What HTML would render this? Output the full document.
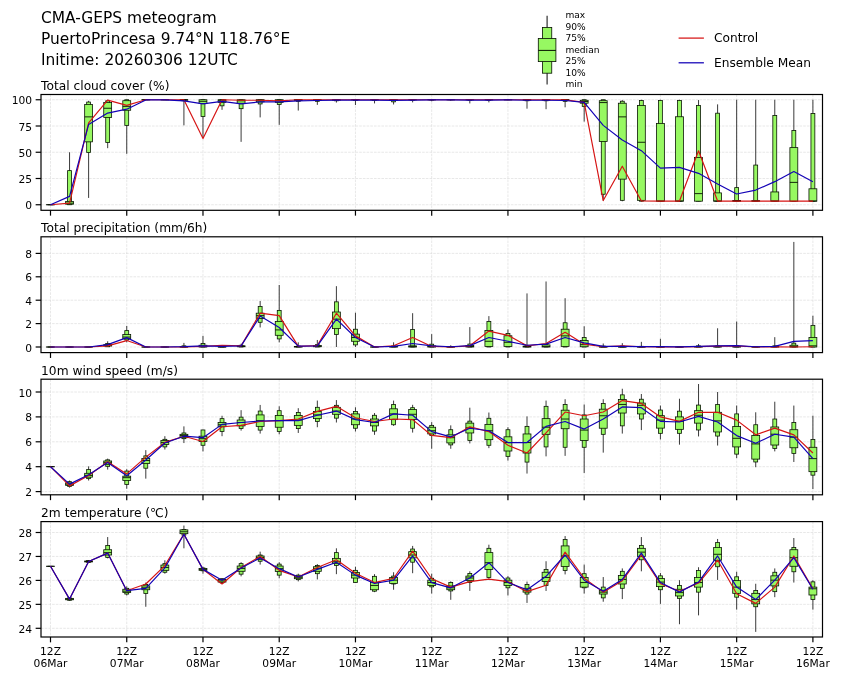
<!DOCTYPE html>
<html lang="en"><head><meta charset="utf-8"><title>CMA-GEPS meteogram</title>
<style>html,body{margin:0;padding:0;background:#fff}svg{display:block;will-change:transform;transform:translateZ(0)}</style></head>
<body>
<svg width="841" height="680" viewBox="0 0 841 680" font-family='"DejaVu Sans", "Liberation Sans", sans-serif'>
<rect width="841" height="680" fill="#fff"/>
<g font-size="15.4" fill="#000">
<text x="41.0" y="22.8">CMA-GEPS meteogram</text>
<text x="41.0" y="43.7">PuertoPrincesa 9.74°N 118.76°E</text>
<text x="41.0" y="64.7">Initime: 20260306 12UTC</text>
</g>
<g stroke="#061000" stroke-width="0.8">
<line x1="547.1" y1="15.7" x2="547.1" y2="84.5" stroke="#303030" stroke-width="1.2"/>
<rect x="542.45" y="27.4" width="9.3" height="45.8" fill="#97f862"/>
<rect x="538.3000000000001" y="38.5" width="17.6" height="23.1" fill="#97f862"/>
<line x1="538.3000000000001" y1="50.4" x2="555.9" y2="50.4" stroke-width="1"/>
</g>
<g font-size="9.1" fill="#000">
<text x="565.4" y="18.10">max</text>
<text x="565.4" y="29.58">90%</text>
<text x="565.4" y="41.06">75%</text>
<text x="565.4" y="52.54">median</text>
<text x="565.4" y="64.02">25%</text>
<text x="565.4" y="75.50">10%</text>
<text x="565.4" y="86.98">min</text>
</g>
<line x1="678.6" y1="38.1" x2="703.9" y2="38.1" stroke="#d61414" stroke-width="1.25"/>
<line x1="678.6" y1="62.8" x2="703.9" y2="62.8" stroke="#1200b6" stroke-width="1.25"/>
<g font-size="12.2" fill="#000"><text x="714.1" y="42.4">Control</text><text x="714.1" y="66.9">Ensemble Mean</text></g>
<g>
<text x="41.1" y="90.00" font-size="12.22" fill="#000">Total cloud cover (%)</text>
<g stroke="#dbdbdb" stroke-width="0.65" stroke-dasharray="2.6 1.1" fill="none">
<line x1="41.0" y1="204.75" x2="822.5" y2="204.75"/>
<line x1="41.0" y1="178.50" x2="822.5" y2="178.50"/>
<line x1="41.0" y1="152.25" x2="822.5" y2="152.25"/>
<line x1="41.0" y1="126.00" x2="822.5" y2="126.00"/>
<line x1="41.0" y1="99.75" x2="822.5" y2="99.75"/>
<line x1="50.50" y1="94.5" x2="50.50" y2="210.3"/>
<line x1="126.74" y1="94.5" x2="126.74" y2="210.3"/>
<line x1="202.98" y1="94.5" x2="202.98" y2="210.3"/>
<line x1="279.22" y1="94.5" x2="279.22" y2="210.3"/>
<line x1="355.46" y1="94.5" x2="355.46" y2="210.3"/>
<line x1="431.70" y1="94.5" x2="431.70" y2="210.3"/>
<line x1="507.94" y1="94.5" x2="507.94" y2="210.3"/>
<line x1="584.18" y1="94.5" x2="584.18" y2="210.3"/>
<line x1="660.42" y1="94.5" x2="660.42" y2="210.3"/>
<line x1="736.66" y1="94.5" x2="736.66" y2="210.3"/>
<line x1="812.90" y1="94.5" x2="812.90" y2="210.3"/>
</g>
<g stroke="#061000" stroke-width="0.78" fill="#97f862">
<line x1="50.50" y1="204.75" x2="50.50" y2="204.75" stroke="#303030" stroke-width="0.95"/>
<rect x="48.55" y="204.75" width="3.9" height="0.01"/>
<rect x="46.55" y="204.75" width="7.9" height="0.01"/>
<line x1="46.55" y1="204.75" x2="54.45" y2="204.75" stroke-width="0.9"/>
<line x1="69.56" y1="152.25" x2="69.56" y2="204.75" stroke="#303030" stroke-width="0.95"/>
<rect x="67.61" y="170.62" width="3.9" height="34.12"/>
<rect x="65.61" y="201.39" width="7.9" height="2.84"/>
<line x1="65.61" y1="203.18" x2="73.51" y2="203.18" stroke-width="0.9"/>
<line x1="88.62" y1="100.80" x2="88.62" y2="197.93" stroke="#303030" stroke-width="0.95"/>
<rect x="86.67" y="102.06" width="3.9" height="50.50"/>
<rect x="84.67" y="104.47" width="7.9" height="37.38"/>
<line x1="84.67" y1="116.86" x2="92.57" y2="116.86" stroke-width="0.9"/>
<line x1="107.68" y1="99.75" x2="107.68" y2="148.16" stroke="#303030" stroke-width="0.95"/>
<rect x="105.73" y="100.80" width="3.9" height="41.69"/>
<rect x="103.73" y="102.58" width="7.9" height="14.80"/>
<line x1="103.73" y1="108.25" x2="111.63" y2="108.25" stroke-width="0.9"/>
<line x1="126.74" y1="99.75" x2="126.74" y2="153.82" stroke="#303030" stroke-width="0.95"/>
<rect x="124.79" y="99.75" width="3.9" height="25.62"/>
<rect x="122.79" y="100.70" width="7.9" height="9.55"/>
<line x1="122.79" y1="106.36" x2="130.69" y2="106.36" stroke-width="0.9"/>
<line x1="145.80" y1="99.75" x2="145.80" y2="99.75" stroke="#303030" stroke-width="0.95"/>
<rect x="143.85" y="99.75" width="3.9" height="0.01"/>
<rect x="141.85" y="99.75" width="7.9" height="0.01"/>
<line x1="141.85" y1="99.75" x2="149.75" y2="99.75" stroke-width="0.9"/>
<line x1="164.86" y1="99.75" x2="164.86" y2="99.75" stroke="#303030" stroke-width="0.95"/>
<rect x="162.91" y="99.75" width="3.9" height="0.01"/>
<rect x="160.91" y="99.75" width="7.9" height="0.01"/>
<line x1="160.91" y1="99.75" x2="168.81" y2="99.75" stroke-width="0.9"/>
<line x1="183.92" y1="99.75" x2="183.92" y2="125.37" stroke="#303030" stroke-width="0.95"/>
<rect x="181.97" y="99.75" width="3.9" height="1.05"/>
<rect x="179.97" y="99.75" width="7.9" height="0.52"/>
<line x1="179.97" y1="99.75" x2="187.87" y2="99.75" stroke-width="0.9"/>
<line x1="202.98" y1="99.75" x2="202.98" y2="137.76" stroke="#303030" stroke-width="0.95"/>
<rect x="201.03" y="99.75" width="3.9" height="16.80"/>
<rect x="199.03" y="99.75" width="7.9" height="3.78"/>
<line x1="199.03" y1="101.32" x2="206.93" y2="101.32" stroke-width="0.9"/>
<line x1="222.04" y1="99.75" x2="222.04" y2="109.83" stroke="#303030" stroke-width="0.95"/>
<rect x="220.09" y="99.75" width="3.9" height="6.09"/>
<rect x="218.09" y="99.75" width="7.9" height="2.62"/>
<line x1="218.09" y1="100.27" x2="225.99" y2="100.27" stroke-width="0.9"/>
<line x1="241.10" y1="99.75" x2="241.10" y2="141.85" stroke="#303030" stroke-width="0.95"/>
<rect x="239.15" y="99.75" width="3.9" height="8.92"/>
<rect x="237.15" y="99.75" width="7.9" height="3.46"/>
<line x1="237.15" y1="100.80" x2="245.05" y2="100.80" stroke-width="0.9"/>
<line x1="260.16" y1="99.75" x2="260.16" y2="117.39" stroke="#303030" stroke-width="0.95"/>
<rect x="258.21" y="99.75" width="3.9" height="4.20"/>
<rect x="256.21" y="99.75" width="7.9" height="2.10"/>
<line x1="256.21" y1="100.27" x2="264.11" y2="100.27" stroke-width="0.9"/>
<line x1="279.22" y1="99.75" x2="279.22" y2="124.84" stroke="#303030" stroke-width="0.95"/>
<rect x="277.27" y="99.75" width="3.9" height="4.72"/>
<rect x="275.27" y="99.75" width="7.9" height="2.62"/>
<line x1="275.27" y1="100.48" x2="283.17" y2="100.48" stroke-width="0.9"/>
<line x1="298.28" y1="99.75" x2="298.28" y2="110.56" stroke="#303030" stroke-width="0.95"/>
<rect x="296.33" y="99.75" width="3.9" height="1.57"/>
<rect x="294.33" y="99.75" width="7.9" height="0.73"/>
<line x1="294.33" y1="99.75" x2="302.23" y2="99.75" stroke-width="0.9"/>
<line x1="317.34" y1="99.75" x2="317.34" y2="104.89" stroke="#303030" stroke-width="0.95"/>
<rect x="315.39" y="99.75" width="3.9" height="1.57"/>
<rect x="313.39" y="99.75" width="7.9" height="0.52"/>
<line x1="313.39" y1="99.75" x2="321.29" y2="99.75" stroke-width="0.9"/>
<line x1="336.40" y1="99.75" x2="336.40" y2="102.58" stroke="#303030" stroke-width="0.95"/>
<rect x="334.45" y="99.75" width="3.9" height="1.05"/>
<rect x="332.45" y="99.75" width="7.9" height="0.42"/>
<line x1="332.45" y1="99.75" x2="340.35" y2="99.75" stroke-width="0.9"/>
<line x1="355.46" y1="99.75" x2="355.46" y2="105.00" stroke="#303030" stroke-width="0.95"/>
<rect x="353.51" y="99.75" width="3.9" height="0.73"/>
<rect x="351.51" y="99.75" width="7.9" height="0.01"/>
<line x1="351.51" y1="99.75" x2="359.41" y2="99.75" stroke-width="0.9"/>
<line x1="374.52" y1="99.75" x2="374.52" y2="103.42" stroke="#303030" stroke-width="0.95"/>
<rect x="372.57" y="99.75" width="3.9" height="0.73"/>
<rect x="370.57" y="99.75" width="7.9" height="0.01"/>
<line x1="370.57" y1="99.75" x2="378.47" y2="99.75" stroke-width="0.9"/>
<line x1="393.58" y1="99.75" x2="393.58" y2="104.47" stroke="#303030" stroke-width="0.95"/>
<rect x="391.63" y="99.75" width="3.9" height="2.10"/>
<rect x="389.63" y="99.75" width="7.9" height="0.52"/>
<line x1="389.63" y1="99.75" x2="397.53" y2="99.75" stroke-width="0.9"/>
<line x1="412.64" y1="99.75" x2="412.64" y2="102.38" stroke="#303030" stroke-width="0.95"/>
<rect x="410.69" y="99.75" width="3.9" height="0.52"/>
<rect x="408.69" y="99.75" width="7.9" height="0.01"/>
<line x1="408.69" y1="99.75" x2="416.59" y2="99.75" stroke-width="0.9"/>
<line x1="431.70" y1="99.75" x2="431.70" y2="101.32" stroke="#303030" stroke-width="0.95"/>
<rect x="429.75" y="99.75" width="3.9" height="0.31"/>
<rect x="427.75" y="99.75" width="7.9" height="0.01"/>
<line x1="427.75" y1="99.75" x2="435.65" y2="99.75" stroke-width="0.9"/>
<line x1="450.76" y1="99.75" x2="450.76" y2="100.80" stroke="#303030" stroke-width="0.95"/>
<rect x="448.81" y="99.75" width="3.9" height="0.01"/>
<rect x="446.81" y="99.75" width="7.9" height="0.01"/>
<line x1="446.81" y1="99.75" x2="454.71" y2="99.75" stroke-width="0.9"/>
<line x1="469.82" y1="99.75" x2="469.82" y2="103.42" stroke="#303030" stroke-width="0.95"/>
<rect x="467.87" y="99.75" width="3.9" height="0.52"/>
<rect x="465.87" y="99.75" width="7.9" height="0.01"/>
<line x1="465.87" y1="99.75" x2="473.77" y2="99.75" stroke-width="0.9"/>
<line x1="488.88" y1="99.75" x2="488.88" y2="102.38" stroke="#303030" stroke-width="0.95"/>
<rect x="486.93" y="99.75" width="3.9" height="0.52"/>
<rect x="484.93" y="99.75" width="7.9" height="0.01"/>
<line x1="484.93" y1="99.75" x2="492.83" y2="99.75" stroke-width="0.9"/>
<line x1="507.94" y1="99.75" x2="507.94" y2="100.27" stroke="#303030" stroke-width="0.95"/>
<rect x="505.99" y="99.75" width="3.9" height="0.01"/>
<rect x="503.99" y="99.75" width="7.9" height="0.01"/>
<line x1="503.99" y1="99.75" x2="511.89" y2="99.75" stroke-width="0.9"/>
<line x1="527.00" y1="99.75" x2="527.00" y2="108.67" stroke="#303030" stroke-width="0.95"/>
<rect x="525.05" y="99.75" width="3.9" height="1.05"/>
<rect x="523.05" y="99.75" width="7.9" height="0.31"/>
<line x1="523.05" y1="99.75" x2="530.95" y2="99.75" stroke-width="0.9"/>
<line x1="546.06" y1="99.75" x2="546.06" y2="109.20" stroke="#303030" stroke-width="0.95"/>
<rect x="544.11" y="99.75" width="3.9" height="1.05"/>
<rect x="542.11" y="99.75" width="7.9" height="0.31"/>
<line x1="542.11" y1="99.75" x2="550.01" y2="99.75" stroke-width="0.9"/>
<line x1="565.12" y1="99.75" x2="565.12" y2="107.31" stroke="#303030" stroke-width="0.95"/>
<rect x="563.17" y="99.75" width="3.9" height="1.57"/>
<rect x="561.17" y="99.75" width="7.9" height="0.52"/>
<line x1="561.17" y1="99.75" x2="569.07" y2="99.75" stroke-width="0.9"/>
<line x1="584.18" y1="99.75" x2="584.18" y2="121.59" stroke="#303030" stroke-width="0.95"/>
<rect x="582.23" y="99.75" width="3.9" height="6.61"/>
<rect x="580.23" y="100.27" width="7.9" height="2.94"/>
<line x1="580.23" y1="101.53" x2="588.13" y2="101.53" stroke-width="0.9"/>
<line x1="603.24" y1="99.75" x2="603.24" y2="200.55" stroke="#303030" stroke-width="0.95"/>
<rect x="601.29" y="99.75" width="3.9" height="94.50"/>
<rect x="599.29" y="100.70" width="7.9" height="40.84"/>
<line x1="599.29" y1="102.58" x2="607.19" y2="102.58" stroke-width="0.9"/>
<line x1="622.30" y1="100.17" x2="622.30" y2="201.28" stroke="#303030" stroke-width="0.95"/>
<rect x="620.35" y="101.22" width="3.9" height="99.12"/>
<rect x="618.35" y="103.21" width="7.9" height="75.92"/>
<line x1="618.35" y1="116.86" x2="626.25" y2="116.86" stroke-width="0.9"/>
<line x1="641.36" y1="99.75" x2="641.36" y2="201.60" stroke="#303030" stroke-width="0.95"/>
<rect x="639.41" y="100.59" width="3.9" height="100.59"/>
<rect x="637.41" y="105.42" width="7.9" height="94.92"/>
<line x1="637.41" y1="142.28" x2="645.31" y2="142.28" stroke-width="0.9"/>
<line x1="660.42" y1="99.75" x2="660.42" y2="201.39" stroke="#303030" stroke-width="0.95"/>
<rect x="658.47" y="100.38" width="3.9" height="100.80"/>
<rect x="656.47" y="123.38" width="7.9" height="77.81"/>
<line x1="656.47" y1="200.97" x2="664.37" y2="200.97" stroke-width="0.9"/>
<line x1="679.48" y1="99.75" x2="679.48" y2="201.39" stroke="#303030" stroke-width="0.95"/>
<rect x="677.53" y="100.38" width="3.9" height="100.80"/>
<rect x="675.53" y="116.76" width="7.9" height="84.42"/>
<line x1="675.53" y1="200.97" x2="683.43" y2="200.97" stroke-width="0.9"/>
<line x1="698.54" y1="100.06" x2="698.54" y2="201.39" stroke="#303030" stroke-width="0.95"/>
<rect x="696.59" y="105.52" width="3.9" height="95.66"/>
<rect x="694.59" y="157.50" width="7.9" height="43.68"/>
<line x1="694.59" y1="193.62" x2="702.49" y2="193.62" stroke-width="0.9"/>
<line x1="717.60" y1="104.37" x2="717.60" y2="201.39" stroke="#303030" stroke-width="0.95"/>
<rect x="715.65" y="113.19" width="3.9" height="87.99"/>
<rect x="713.65" y="192.88" width="7.9" height="8.30"/>
<line x1="713.65" y1="200.97" x2="721.55" y2="200.97" stroke-width="0.9"/>
<line x1="736.66" y1="99.75" x2="736.66" y2="201.39" stroke="#303030" stroke-width="0.95"/>
<rect x="734.71" y="187.63" width="3.9" height="13.55"/>
<rect x="732.71" y="200.55" width="7.9" height="0.63"/>
<line x1="732.71" y1="201.07" x2="740.61" y2="201.07" stroke-width="0.9"/>
<line x1="755.72" y1="99.75" x2="755.72" y2="201.39" stroke="#303030" stroke-width="0.95"/>
<rect x="753.77" y="165.06" width="3.9" height="36.12"/>
<rect x="751.77" y="200.66" width="7.9" height="0.53"/>
<line x1="751.77" y1="201.07" x2="759.67" y2="201.07" stroke-width="0.9"/>
<line x1="774.78" y1="99.75" x2="774.78" y2="201.39" stroke="#303030" stroke-width="0.95"/>
<rect x="772.83" y="115.50" width="3.9" height="85.68"/>
<rect x="770.83" y="191.94" width="7.9" height="9.24"/>
<line x1="770.83" y1="200.97" x2="778.73" y2="200.97" stroke-width="0.9"/>
<line x1="793.84" y1="99.75" x2="793.84" y2="201.39" stroke="#303030" stroke-width="0.95"/>
<rect x="791.89" y="130.51" width="3.9" height="70.67"/>
<rect x="789.89" y="147.63" width="7.9" height="53.55"/>
<line x1="789.89" y1="182.38" x2="797.79" y2="182.38" stroke-width="0.9"/>
<line x1="812.90" y1="99.75" x2="812.90" y2="201.39" stroke="#303030" stroke-width="0.95"/>
<rect x="810.95" y="113.40" width="3.9" height="87.78"/>
<rect x="808.95" y="188.79" width="7.9" height="12.39"/>
<line x1="808.95" y1="200.97" x2="816.85" y2="200.97" stroke-width="0.9"/>
</g>
<polyline points="50.50,204.75 69.56,203.18 88.62,122.85 107.68,100.17 126.74,105.42 145.80,99.75 164.86,99.75 183.92,99.75 202.98,138.60 222.04,99.75 241.10,100.27 260.16,100.27 279.22,100.80 298.28,99.75 317.34,99.75 336.40,99.75 355.46,99.75 374.52,99.75 393.58,99.75 412.64,99.75 431.70,99.75 450.76,99.75 469.82,99.75 488.88,99.75 507.94,99.75 527.00,99.75 546.06,99.75 565.12,99.75 584.18,102.38 603.24,200.55 622.30,166.22 641.36,200.97 660.42,201.18 679.48,201.07 698.54,150.78 717.60,201.07 736.66,201.18 755.72,201.18 774.78,201.18 793.84,201.18 812.90,201.18" fill="none" stroke="#d61414" stroke-width="1.18" stroke-linejoin="round"/>
<polyline points="50.50,204.75 69.56,196.35 88.62,124.42 107.68,113.08 126.74,109.20 145.80,99.96 164.86,99.96 183.92,100.80 202.98,103.95 222.04,101.32 241.10,103.95 260.16,101.85 279.22,101.85 298.28,100.80 317.34,100.48 336.40,100.17 355.46,100.06 374.52,100.17 393.58,100.38 412.64,100.06 431.70,99.96 450.76,99.85 469.82,100.17 488.88,100.06 507.94,99.85 527.00,100.27 546.06,100.27 565.12,100.48 584.18,102.38 603.24,125.37 622.30,139.96 641.36,150.68 660.42,168.10 679.48,167.37 698.54,173.35 717.60,184.06 736.66,194.04 755.72,190.05 774.78,181.65 793.84,171.47 812.90,181.65" fill="none" stroke="#1200b6" stroke-width="1.18" stroke-linejoin="round"/>
<rect x="41.0" y="94.5" width="781.5" height="115.80000000000001" fill="none" stroke="#000" stroke-width="1.2"/>
<g stroke="#000" stroke-width="1.2">
<line x1="35.65" y1="204.75" x2="41.0" y2="204.75"/>
<line x1="35.65" y1="178.50" x2="41.0" y2="178.50"/>
<line x1="35.65" y1="152.25" x2="41.0" y2="152.25"/>
<line x1="35.65" y1="126.00" x2="41.0" y2="126.00"/>
<line x1="35.65" y1="99.75" x2="41.0" y2="99.75"/>
<line x1="50.50" y1="210.3" x2="50.50" y2="215.65"/>
<line x1="126.74" y1="210.3" x2="126.74" y2="215.65"/>
<line x1="202.98" y1="210.3" x2="202.98" y2="215.65"/>
<line x1="279.22" y1="210.3" x2="279.22" y2="215.65"/>
<line x1="355.46" y1="210.3" x2="355.46" y2="215.65"/>
<line x1="431.70" y1="210.3" x2="431.70" y2="215.65"/>
<line x1="507.94" y1="210.3" x2="507.94" y2="215.65"/>
<line x1="584.18" y1="210.3" x2="584.18" y2="215.65"/>
<line x1="660.42" y1="210.3" x2="660.42" y2="215.65"/>
<line x1="736.66" y1="210.3" x2="736.66" y2="215.65"/>
<line x1="812.90" y1="210.3" x2="812.90" y2="215.65"/>
</g>
<g font-size="10.7" fill="#000" text-anchor="end">
<text x="32.1" y="209.25">0</text>
<text x="32.1" y="183.00">25</text>
<text x="32.1" y="156.75">50</text>
<text x="32.1" y="130.50">75</text>
<text x="32.1" y="104.25">100</text>
</g>
</g>
<g>
<text x="41.1" y="232.30" font-size="12.22" fill="#000">Total precipitation (mm/6h)</text>
<g stroke="#dbdbdb" stroke-width="0.65" stroke-dasharray="2.6 1.1" fill="none">
<line x1="41.0" y1="347.00" x2="822.5" y2="347.00"/>
<line x1="41.0" y1="323.60" x2="822.5" y2="323.60"/>
<line x1="41.0" y1="300.20" x2="822.5" y2="300.20"/>
<line x1="41.0" y1="276.80" x2="822.5" y2="276.80"/>
<line x1="41.0" y1="253.40" x2="822.5" y2="253.40"/>
<line x1="50.50" y1="236.8" x2="50.50" y2="352.6"/>
<line x1="126.74" y1="236.8" x2="126.74" y2="352.6"/>
<line x1="202.98" y1="236.8" x2="202.98" y2="352.6"/>
<line x1="279.22" y1="236.8" x2="279.22" y2="352.6"/>
<line x1="355.46" y1="236.8" x2="355.46" y2="352.6"/>
<line x1="431.70" y1="236.8" x2="431.70" y2="352.6"/>
<line x1="507.94" y1="236.8" x2="507.94" y2="352.6"/>
<line x1="584.18" y1="236.8" x2="584.18" y2="352.6"/>
<line x1="660.42" y1="236.8" x2="660.42" y2="352.6"/>
<line x1="736.66" y1="236.8" x2="736.66" y2="352.6"/>
<line x1="812.90" y1="236.8" x2="812.90" y2="352.6"/>
</g>
<g stroke="#061000" stroke-width="0.78" fill="#97f862">
<line x1="50.50" y1="347.00" x2="50.50" y2="347.00" stroke="#303030" stroke-width="0.95"/>
<rect x="48.55" y="347.00" width="3.9" height="0.01"/>
<rect x="46.55" y="347.00" width="7.9" height="0.01"/>
<line x1="46.55" y1="347.00" x2="54.45" y2="347.00" stroke-width="0.9"/>
<line x1="69.56" y1="347.00" x2="69.56" y2="347.00" stroke="#303030" stroke-width="0.95"/>
<rect x="67.61" y="347.00" width="3.9" height="0.01"/>
<rect x="65.61" y="347.00" width="7.9" height="0.01"/>
<line x1="65.61" y1="347.00" x2="73.51" y2="347.00" stroke-width="0.9"/>
<line x1="88.62" y1="347.00" x2="88.62" y2="347.00" stroke="#303030" stroke-width="0.95"/>
<rect x="86.67" y="347.00" width="3.9" height="0.01"/>
<rect x="84.67" y="347.00" width="7.9" height="0.01"/>
<line x1="84.67" y1="347.00" x2="92.57" y2="347.00" stroke-width="0.9"/>
<line x1="107.68" y1="341.27" x2="107.68" y2="347.00" stroke="#303030" stroke-width="0.95"/>
<rect x="105.73" y="343.49" width="3.9" height="3.28"/>
<rect x="103.73" y="344.66" width="7.9" height="1.40"/>
<line x1="103.73" y1="345.25" x2="111.63" y2="345.25" stroke-width="0.9"/>
<line x1="126.74" y1="325.94" x2="126.74" y2="342.32" stroke="#303030" stroke-width="0.95"/>
<rect x="124.79" y="330.62" width="3.9" height="9.36"/>
<rect x="122.79" y="334.60" width="7.9" height="4.21"/>
<line x1="122.79" y1="337.06" x2="130.69" y2="337.06" stroke-width="0.9"/>
<line x1="145.80" y1="346.77" x2="145.80" y2="347.00" stroke="#303030" stroke-width="0.95"/>
<rect x="143.85" y="347.00" width="3.9" height="0.01"/>
<rect x="141.85" y="347.00" width="7.9" height="0.01"/>
<line x1="141.85" y1="347.00" x2="149.75" y2="347.00" stroke-width="0.9"/>
<line x1="164.86" y1="346.77" x2="164.86" y2="347.00" stroke="#303030" stroke-width="0.95"/>
<rect x="162.91" y="347.00" width="3.9" height="0.01"/>
<rect x="160.91" y="347.00" width="7.9" height="0.01"/>
<line x1="160.91" y1="347.00" x2="168.81" y2="347.00" stroke-width="0.9"/>
<line x1="183.92" y1="342.90" x2="183.92" y2="347.00" stroke="#303030" stroke-width="0.95"/>
<rect x="181.97" y="345.83" width="3.9" height="1.17"/>
<rect x="179.97" y="346.65" width="7.9" height="0.35"/>
<line x1="179.97" y1="347.00" x2="187.87" y2="347.00" stroke-width="0.9"/>
<line x1="202.98" y1="335.88" x2="202.98" y2="347.00" stroke="#303030" stroke-width="0.95"/>
<rect x="201.03" y="343.49" width="3.9" height="3.51"/>
<rect x="199.03" y="345.25" width="7.9" height="1.75"/>
<line x1="199.03" y1="346.65" x2="206.93" y2="346.65" stroke-width="0.9"/>
<line x1="222.04" y1="345.83" x2="222.04" y2="347.00" stroke="#303030" stroke-width="0.95"/>
<rect x="220.09" y="346.42" width="3.9" height="0.58"/>
<rect x="218.09" y="346.77" width="7.9" height="0.23"/>
<line x1="218.09" y1="347.00" x2="225.99" y2="347.00" stroke-width="0.9"/>
<line x1="241.10" y1="343.72" x2="241.10" y2="347.00" stroke="#303030" stroke-width="0.95"/>
<rect x="239.15" y="345.25" width="3.9" height="1.75"/>
<rect x="237.15" y="345.83" width="7.9" height="0.94"/>
<line x1="237.15" y1="346.30" x2="245.05" y2="346.30" stroke-width="0.9"/>
<line x1="260.16" y1="301.02" x2="260.16" y2="327.46" stroke="#303030" stroke-width="0.95"/>
<rect x="258.21" y="306.52" width="3.9" height="15.79"/>
<rect x="256.21" y="313.19" width="7.9" height="5.26"/>
<line x1="256.21" y1="315.64" x2="264.11" y2="315.64" stroke-width="0.9"/>
<line x1="279.22" y1="284.99" x2="279.22" y2="342.32" stroke="#303030" stroke-width="0.95"/>
<rect x="277.27" y="310.38" width="3.9" height="28.55"/>
<rect x="275.27" y="321.61" width="7.9" height="13.69"/>
<line x1="275.27" y1="329.92" x2="283.17" y2="329.92" stroke-width="0.9"/>
<line x1="298.28" y1="342.32" x2="298.28" y2="347.00" stroke="#303030" stroke-width="0.95"/>
<rect x="296.33" y="346.06" width="3.9" height="0.94"/>
<rect x="294.33" y="346.42" width="7.9" height="0.58"/>
<line x1="294.33" y1="346.77" x2="302.23" y2="346.77" stroke-width="0.9"/>
<line x1="317.34" y1="339.98" x2="317.34" y2="347.00" stroke="#303030" stroke-width="0.95"/>
<rect x="315.39" y="344.66" width="3.9" height="2.34"/>
<rect x="313.39" y="345.60" width="7.9" height="1.17"/>
<line x1="313.39" y1="346.30" x2="321.29" y2="346.30" stroke-width="0.9"/>
<line x1="336.40" y1="286.16" x2="336.40" y2="347.00" stroke="#303030" stroke-width="0.95"/>
<rect x="334.45" y="301.84" width="3.9" height="32.76"/>
<rect x="332.45" y="312.02" width="7.9" height="16.61"/>
<line x1="332.45" y1="319.15" x2="340.35" y2="319.15" stroke-width="0.9"/>
<line x1="355.46" y1="312.72" x2="355.46" y2="347.00" stroke="#303030" stroke-width="0.95"/>
<rect x="353.51" y="329.22" width="3.9" height="15.68"/>
<rect x="351.51" y="334.13" width="7.9" height="7.14"/>
<line x1="351.51" y1="337.52" x2="359.41" y2="337.52" stroke-width="0.9"/>
<line x1="374.52" y1="346.65" x2="374.52" y2="347.00" stroke="#303030" stroke-width="0.95"/>
<rect x="372.57" y="347.00" width="3.9" height="0.01"/>
<rect x="370.57" y="347.00" width="7.9" height="0.01"/>
<line x1="370.57" y1="347.00" x2="378.47" y2="347.00" stroke-width="0.9"/>
<line x1="393.58" y1="342.32" x2="393.58" y2="347.00" stroke="#303030" stroke-width="0.95"/>
<rect x="391.63" y="345.83" width="3.9" height="1.17"/>
<rect x="389.63" y="346.42" width="7.9" height="0.58"/>
<line x1="389.63" y1="346.77" x2="397.53" y2="346.77" stroke-width="0.9"/>
<line x1="412.64" y1="313.19" x2="412.64" y2="347.00" stroke="#303030" stroke-width="0.95"/>
<rect x="410.69" y="329.45" width="3.9" height="17.55"/>
<rect x="408.69" y="345.83" width="7.9" height="1.17"/>
<line x1="408.69" y1="346.65" x2="416.59" y2="346.65" stroke-width="0.9"/>
<line x1="431.70" y1="334.13" x2="431.70" y2="347.00" stroke="#303030" stroke-width="0.95"/>
<rect x="429.75" y="344.19" width="3.9" height="2.81"/>
<rect x="427.75" y="345.83" width="7.9" height="1.17"/>
<line x1="427.75" y1="346.65" x2="435.65" y2="346.65" stroke-width="0.9"/>
<line x1="450.76" y1="345.25" x2="450.76" y2="347.00" stroke="#303030" stroke-width="0.95"/>
<rect x="448.81" y="346.42" width="3.9" height="0.58"/>
<rect x="446.81" y="346.77" width="7.9" height="0.23"/>
<line x1="446.81" y1="347.00" x2="454.71" y2="347.00" stroke-width="0.9"/>
<line x1="469.82" y1="327.11" x2="469.82" y2="347.00" stroke="#303030" stroke-width="0.95"/>
<rect x="467.87" y="344.07" width="3.9" height="2.93"/>
<rect x="465.87" y="345.60" width="7.9" height="1.40"/>
<line x1="465.87" y1="346.53" x2="473.77" y2="346.53" stroke-width="0.9"/>
<line x1="488.88" y1="316.11" x2="488.88" y2="347.00" stroke="#303030" stroke-width="0.95"/>
<rect x="486.93" y="321.61" width="3.9" height="25.39"/>
<rect x="484.93" y="330.39" width="7.9" height="16.03"/>
<line x1="484.93" y1="341.27" x2="492.83" y2="341.27" stroke-width="0.9"/>
<line x1="507.94" y1="329.45" x2="507.94" y2="347.00" stroke="#303030" stroke-width="0.95"/>
<rect x="505.99" y="333.43" width="3.9" height="13.57"/>
<rect x="503.99" y="335.77" width="7.9" height="10.65"/>
<line x1="503.99" y1="342.32" x2="511.89" y2="342.32" stroke-width="0.9"/>
<line x1="527.00" y1="293.41" x2="527.00" y2="347.00" stroke="#303030" stroke-width="0.95"/>
<rect x="525.05" y="345.25" width="3.9" height="1.75"/>
<rect x="523.05" y="346.06" width="7.9" height="0.94"/>
<line x1="523.05" y1="346.65" x2="530.95" y2="346.65" stroke-width="0.9"/>
<line x1="546.06" y1="281.48" x2="546.06" y2="347.00" stroke="#303030" stroke-width="0.95"/>
<rect x="544.11" y="344.66" width="3.9" height="2.34"/>
<rect x="542.11" y="344.89" width="7.9" height="2.11"/>
<line x1="542.11" y1="346.42" x2="550.01" y2="346.42" stroke-width="0.9"/>
<line x1="565.12" y1="298.21" x2="565.12" y2="347.00" stroke="#303030" stroke-width="0.95"/>
<rect x="563.17" y="322.78" width="3.9" height="24.22"/>
<rect x="561.17" y="329.22" width="7.9" height="17.20"/>
<line x1="561.17" y1="335.88" x2="569.07" y2="335.88" stroke-width="0.9"/>
<line x1="584.18" y1="326.29" x2="584.18" y2="347.00" stroke="#303030" stroke-width="0.95"/>
<rect x="582.23" y="337.52" width="3.9" height="9.48"/>
<rect x="580.23" y="340.56" width="7.9" height="6.20"/>
<line x1="580.23" y1="344.66" x2="588.13" y2="344.66" stroke-width="0.9"/>
<line x1="603.24" y1="343.49" x2="603.24" y2="347.00" stroke="#303030" stroke-width="0.95"/>
<rect x="601.29" y="346.06" width="3.9" height="0.94"/>
<rect x="599.29" y="346.65" width="7.9" height="0.35"/>
<line x1="599.29" y1="347.00" x2="607.19" y2="347.00" stroke-width="0.9"/>
<line x1="622.30" y1="343.14" x2="622.30" y2="347.00" stroke="#303030" stroke-width="0.95"/>
<rect x="620.35" y="346.06" width="3.9" height="0.94"/>
<rect x="618.35" y="346.65" width="7.9" height="0.35"/>
<line x1="618.35" y1="347.00" x2="626.25" y2="347.00" stroke-width="0.9"/>
<line x1="641.36" y1="341.85" x2="641.36" y2="347.00" stroke="#303030" stroke-width="0.95"/>
<rect x="639.41" y="346.30" width="3.9" height="0.70"/>
<rect x="637.41" y="346.77" width="7.9" height="0.23"/>
<line x1="637.41" y1="347.00" x2="645.31" y2="347.00" stroke-width="0.9"/>
<line x1="660.42" y1="338.81" x2="660.42" y2="347.00" stroke="#303030" stroke-width="0.95"/>
<rect x="658.47" y="346.42" width="3.9" height="0.58"/>
<rect x="656.47" y="346.77" width="7.9" height="0.23"/>
<line x1="656.47" y1="347.00" x2="664.37" y2="347.00" stroke-width="0.9"/>
<line x1="679.48" y1="346.65" x2="679.48" y2="347.00" stroke="#303030" stroke-width="0.95"/>
<rect x="677.53" y="346.88" width="3.9" height="0.12"/>
<rect x="675.53" y="347.00" width="7.9" height="0.01"/>
<line x1="675.53" y1="347.00" x2="683.43" y2="347.00" stroke-width="0.9"/>
<line x1="698.54" y1="343.96" x2="698.54" y2="347.00" stroke="#303030" stroke-width="0.95"/>
<rect x="696.59" y="345.83" width="3.9" height="1.17"/>
<rect x="694.59" y="346.42" width="7.9" height="0.58"/>
<line x1="694.59" y1="346.77" x2="702.49" y2="346.77" stroke-width="0.9"/>
<line x1="717.60" y1="328.28" x2="717.60" y2="347.00" stroke="#303030" stroke-width="0.95"/>
<rect x="715.65" y="345.83" width="3.9" height="1.17"/>
<rect x="713.65" y="346.42" width="7.9" height="0.58"/>
<line x1="713.65" y1="346.77" x2="721.55" y2="346.77" stroke-width="0.9"/>
<line x1="736.66" y1="321.49" x2="736.66" y2="347.00" stroke="#303030" stroke-width="0.95"/>
<rect x="734.71" y="345.83" width="3.9" height="1.17"/>
<rect x="732.71" y="346.42" width="7.9" height="0.58"/>
<line x1="732.71" y1="346.77" x2="740.61" y2="346.77" stroke-width="0.9"/>
<line x1="755.72" y1="346.65" x2="755.72" y2="347.00" stroke="#303030" stroke-width="0.95"/>
<rect x="753.77" y="346.88" width="3.9" height="0.12"/>
<rect x="751.77" y="347.00" width="7.9" height="0.01"/>
<line x1="751.77" y1="347.00" x2="759.67" y2="347.00" stroke-width="0.9"/>
<line x1="774.78" y1="337.17" x2="774.78" y2="347.00" stroke="#303030" stroke-width="0.95"/>
<rect x="772.83" y="345.83" width="3.9" height="1.17"/>
<rect x="770.83" y="346.42" width="7.9" height="0.58"/>
<line x1="770.83" y1="346.77" x2="778.73" y2="346.77" stroke-width="0.9"/>
<line x1="793.84" y1="241.93" x2="793.84" y2="347.00" stroke="#303030" stroke-width="0.95"/>
<rect x="791.89" y="343.14" width="3.9" height="3.86"/>
<rect x="789.89" y="345.25" width="7.9" height="1.75"/>
<line x1="789.89" y1="346.65" x2="797.79" y2="346.65" stroke-width="0.9"/>
<line x1="812.90" y1="315.76" x2="812.90" y2="347.00" stroke="#303030" stroke-width="0.95"/>
<rect x="810.95" y="325.36" width="3.9" height="21.64"/>
<rect x="808.95" y="337.41" width="7.9" height="9.59"/>
<line x1="808.95" y1="345.83" x2="816.85" y2="345.83" stroke-width="0.9"/>
</g>
<polyline points="50.50,347.00 69.56,347.00 88.62,347.00 107.68,345.83 126.74,340.56 145.80,347.00 164.86,347.00 183.92,347.00 202.98,346.42 222.04,345.25 241.10,345.83 260.16,313.19 279.22,315.64 298.28,346.42 317.34,345.60 336.40,313.19 355.46,335.88 374.52,347.00 393.58,345.83 412.64,337.52 431.70,346.42 450.76,347.00 469.82,345.83 488.88,331.09 507.94,335.30 527.00,345.83 546.06,343.49 565.12,332.26 584.18,344.19 603.24,346.77 622.30,345.83 641.36,346.77 660.42,347.00 679.48,347.00 698.54,346.65 717.60,346.06 736.66,345.83 755.72,347.00 774.78,346.77 793.84,347.00 812.90,346.77" fill="none" stroke="#d61414" stroke-width="1.18" stroke-linejoin="round"/>
<polyline points="50.50,347.00 69.56,347.00 88.62,347.00 107.68,344.66 126.74,337.64 145.80,347.00 164.86,347.00 183.92,346.65 202.98,345.83 222.04,346.42 241.10,345.83 260.16,316.11 279.22,327.46 298.28,346.06 317.34,345.83 336.40,319.15 355.46,337.52 374.52,347.00 393.58,346.42 412.64,343.49 431.70,345.83 450.76,346.77 469.82,345.60 488.88,337.52 507.94,341.27 527.00,345.25 546.06,344.07 565.12,337.52 584.18,342.90 603.24,346.42 622.30,346.42 641.36,346.65 660.42,346.65 679.48,346.88 698.54,346.42 717.60,345.83 736.66,345.60 755.72,346.77 774.78,346.42 793.84,341.38 812.90,340.56" fill="none" stroke="#1200b6" stroke-width="1.18" stroke-linejoin="round"/>
<rect x="41.0" y="236.8" width="781.5" height="115.80000000000001" fill="none" stroke="#000" stroke-width="1.2"/>
<g stroke="#000" stroke-width="1.2">
<line x1="35.65" y1="347.00" x2="41.0" y2="347.00"/>
<line x1="35.65" y1="323.60" x2="41.0" y2="323.60"/>
<line x1="35.65" y1="300.20" x2="41.0" y2="300.20"/>
<line x1="35.65" y1="276.80" x2="41.0" y2="276.80"/>
<line x1="35.65" y1="253.40" x2="41.0" y2="253.40"/>
<line x1="50.50" y1="352.6" x2="50.50" y2="357.95000000000005"/>
<line x1="126.74" y1="352.6" x2="126.74" y2="357.95000000000005"/>
<line x1="202.98" y1="352.6" x2="202.98" y2="357.95000000000005"/>
<line x1="279.22" y1="352.6" x2="279.22" y2="357.95000000000005"/>
<line x1="355.46" y1="352.6" x2="355.46" y2="357.95000000000005"/>
<line x1="431.70" y1="352.6" x2="431.70" y2="357.95000000000005"/>
<line x1="507.94" y1="352.6" x2="507.94" y2="357.95000000000005"/>
<line x1="584.18" y1="352.6" x2="584.18" y2="357.95000000000005"/>
<line x1="660.42" y1="352.6" x2="660.42" y2="357.95000000000005"/>
<line x1="736.66" y1="352.6" x2="736.66" y2="357.95000000000005"/>
<line x1="812.90" y1="352.6" x2="812.90" y2="357.95000000000005"/>
</g>
<g font-size="10.7" fill="#000" text-anchor="end">
<text x="32.1" y="351.50">0</text>
<text x="32.1" y="328.10">2</text>
<text x="32.1" y="304.70">4</text>
<text x="32.1" y="281.30">6</text>
<text x="32.1" y="257.90">8</text>
</g>
</g>
<g>
<text x="41.1" y="374.70" font-size="12.22" fill="#000">10m wind speed (m/s)</text>
<g stroke="#dbdbdb" stroke-width="0.65" stroke-dasharray="2.6 1.1" fill="none">
<line x1="41.0" y1="491.60" x2="822.5" y2="491.60"/>
<line x1="41.0" y1="466.70" x2="822.5" y2="466.70"/>
<line x1="41.0" y1="441.80" x2="822.5" y2="441.80"/>
<line x1="41.0" y1="416.90" x2="822.5" y2="416.90"/>
<line x1="41.0" y1="392.00" x2="822.5" y2="392.00"/>
<line x1="50.50" y1="379.2" x2="50.50" y2="494.8"/>
<line x1="126.74" y1="379.2" x2="126.74" y2="494.8"/>
<line x1="202.98" y1="379.2" x2="202.98" y2="494.8"/>
<line x1="279.22" y1="379.2" x2="279.22" y2="494.8"/>
<line x1="355.46" y1="379.2" x2="355.46" y2="494.8"/>
<line x1="431.70" y1="379.2" x2="431.70" y2="494.8"/>
<line x1="507.94" y1="379.2" x2="507.94" y2="494.8"/>
<line x1="584.18" y1="379.2" x2="584.18" y2="494.8"/>
<line x1="660.42" y1="379.2" x2="660.42" y2="494.8"/>
<line x1="736.66" y1="379.2" x2="736.66" y2="494.8"/>
<line x1="812.90" y1="379.2" x2="812.90" y2="494.8"/>
</g>
<g stroke="#061000" stroke-width="0.78" fill="#97f862">
<line x1="50.50" y1="466.70" x2="50.50" y2="466.70" stroke="#303030" stroke-width="0.95"/>
<rect x="48.55" y="466.70" width="3.9" height="0.01"/>
<rect x="46.55" y="466.70" width="7.9" height="0.01"/>
<line x1="46.55" y1="466.70" x2="54.45" y2="466.70" stroke-width="0.9"/>
<line x1="69.56" y1="480.52" x2="69.56" y2="487.62" stroke="#303030" stroke-width="0.95"/>
<rect x="67.61" y="481.64" width="3.9" height="4.73"/>
<rect x="65.61" y="482.89" width="7.9" height="2.49"/>
<line x1="65.61" y1="484.13" x2="73.51" y2="484.13" stroke-width="0.9"/>
<line x1="88.62" y1="466.33" x2="88.62" y2="480.52" stroke="#303030" stroke-width="0.95"/>
<rect x="86.67" y="469.56" width="3.9" height="9.09"/>
<rect x="84.67" y="473.30" width="7.9" height="3.86"/>
<line x1="84.67" y1="475.42" x2="92.57" y2="475.42" stroke-width="0.9"/>
<line x1="107.68" y1="458.61" x2="107.68" y2="469.56" stroke="#303030" stroke-width="0.95"/>
<rect x="105.73" y="459.85" width="3.9" height="6.47"/>
<rect x="103.73" y="460.97" width="7.9" height="3.36"/>
<line x1="103.73" y1="462.34" x2="111.63" y2="462.34" stroke-width="0.9"/>
<line x1="126.74" y1="469.19" x2="126.74" y2="488.74" stroke="#303030" stroke-width="0.95"/>
<rect x="124.79" y="471.06" width="3.9" height="13.32"/>
<rect x="122.79" y="476.16" width="7.9" height="4.36"/>
<line x1="122.79" y1="477.66" x2="130.69" y2="477.66" stroke-width="0.9"/>
<line x1="145.80" y1="450.14" x2="145.80" y2="478.65" stroke="#303030" stroke-width="0.95"/>
<rect x="143.85" y="455.87" width="3.9" height="12.33"/>
<rect x="141.85" y="458.61" width="7.9" height="4.86"/>
<line x1="141.85" y1="460.48" x2="149.75" y2="460.48" stroke-width="0.9"/>
<line x1="164.86" y1="436.20" x2="164.86" y2="449.52" stroke="#303030" stroke-width="0.95"/>
<rect x="162.91" y="439.31" width="3.9" height="7.59"/>
<rect x="160.91" y="440.56" width="7.9" height="3.86"/>
<line x1="160.91" y1="442.42" x2="168.81" y2="442.42" stroke-width="0.9"/>
<line x1="183.92" y1="426.36" x2="183.92" y2="443.05" stroke="#303030" stroke-width="0.95"/>
<rect x="181.97" y="432.96" width="3.9" height="5.73"/>
<rect x="179.97" y="434.33" width="7.9" height="3.36"/>
<line x1="179.97" y1="435.58" x2="187.87" y2="435.58" stroke-width="0.9"/>
<line x1="202.98" y1="429.72" x2="202.98" y2="451.39" stroke="#303030" stroke-width="0.95"/>
<rect x="201.03" y="429.97" width="3.9" height="15.31"/>
<rect x="199.03" y="436.20" width="7.9" height="5.35"/>
<line x1="199.03" y1="438.69" x2="206.93" y2="438.69" stroke-width="0.9"/>
<line x1="222.04" y1="415.78" x2="222.04" y2="436.20" stroke="#303030" stroke-width="0.95"/>
<rect x="220.09" y="418.64" width="3.9" height="12.82"/>
<rect x="218.09" y="422.50" width="7.9" height="4.23"/>
<line x1="218.09" y1="424.74" x2="225.99" y2="424.74" stroke-width="0.9"/>
<line x1="241.10" y1="410.18" x2="241.10" y2="430.60" stroke="#303030" stroke-width="0.95"/>
<rect x="239.15" y="417.15" width="3.9" height="11.45"/>
<rect x="237.15" y="420.01" width="7.9" height="5.85"/>
<line x1="237.15" y1="422.50" x2="245.05" y2="422.50" stroke-width="0.9"/>
<line x1="260.16" y1="404.95" x2="260.16" y2="433.58" stroke="#303030" stroke-width="0.95"/>
<rect x="258.21" y="411.05" width="3.9" height="19.05"/>
<rect x="256.21" y="414.91" width="7.9" height="11.45"/>
<line x1="256.21" y1="420.63" x2="264.11" y2="420.63" stroke-width="0.9"/>
<line x1="279.22" y1="406.32" x2="279.22" y2="434.33" stroke="#303030" stroke-width="0.95"/>
<rect x="277.27" y="410.68" width="3.9" height="20.79"/>
<rect x="275.27" y="415.41" width="7.9" height="11.83"/>
<line x1="275.27" y1="420.63" x2="283.17" y2="420.63" stroke-width="0.9"/>
<line x1="298.28" y1="408.19" x2="298.28" y2="432.96" stroke="#303030" stroke-width="0.95"/>
<rect x="296.33" y="412.42" width="3.9" height="16.19"/>
<rect x="294.33" y="415.41" width="7.9" height="9.96"/>
<line x1="294.33" y1="420.01" x2="302.23" y2="420.01" stroke-width="0.9"/>
<line x1="317.34" y1="400.59" x2="317.34" y2="427.23" stroke="#303030" stroke-width="0.95"/>
<rect x="315.39" y="407.31" width="3.9" height="14.19"/>
<rect x="313.39" y="411.42" width="7.9" height="7.22"/>
<line x1="313.39" y1="414.91" x2="321.29" y2="414.91" stroke-width="0.9"/>
<line x1="336.40" y1="400.09" x2="336.40" y2="422.50" stroke="#303030" stroke-width="0.95"/>
<rect x="334.45" y="405.32" width="3.9" height="12.82"/>
<rect x="332.45" y="407.31" width="7.9" height="6.97"/>
<line x1="332.45" y1="411.05" x2="340.35" y2="411.05" stroke-width="0.9"/>
<line x1="355.46" y1="407.31" x2="355.46" y2="431.47" stroke="#303030" stroke-width="0.95"/>
<rect x="353.51" y="411.42" width="3.9" height="16.81"/>
<rect x="351.51" y="413.91" width="7.9" height="10.83"/>
<line x1="351.51" y1="419.02" x2="359.41" y2="419.02" stroke-width="0.9"/>
<line x1="374.52" y1="413.04" x2="374.52" y2="434.83" stroke="#303030" stroke-width="0.95"/>
<rect x="372.57" y="415.28" width="3.9" height="15.81"/>
<rect x="370.57" y="419.02" width="7.9" height="6.85"/>
<line x1="370.57" y1="422.50" x2="378.47" y2="422.50" stroke-width="0.9"/>
<line x1="393.58" y1="400.59" x2="393.58" y2="425.86" stroke="#303030" stroke-width="0.95"/>
<rect x="391.63" y="404.45" width="3.9" height="20.29"/>
<rect x="389.63" y="408.81" width="7.9" height="10.83"/>
<line x1="389.63" y1="413.91" x2="397.53" y2="413.91" stroke-width="0.9"/>
<line x1="412.64" y1="404.82" x2="412.64" y2="432.59" stroke="#303030" stroke-width="0.95"/>
<rect x="410.69" y="407.69" width="3.9" height="20.54"/>
<rect x="408.69" y="409.55" width="7.9" height="10.08"/>
<line x1="408.69" y1="414.29" x2="416.59" y2="414.29" stroke-width="0.9"/>
<line x1="431.70" y1="422.13" x2="431.70" y2="448.77" stroke="#303030" stroke-width="0.95"/>
<rect x="429.75" y="425.37" width="3.9" height="10.08"/>
<rect x="427.75" y="427.23" width="7.9" height="6.72"/>
<line x1="427.75" y1="430.72" x2="435.65" y2="430.72" stroke-width="0.9"/>
<line x1="450.76" y1="425.37" x2="450.76" y2="448.77" stroke="#303030" stroke-width="0.95"/>
<rect x="448.81" y="429.72" width="3.9" height="15.19"/>
<rect x="446.81" y="434.83" width="7.9" height="8.09"/>
<line x1="446.81" y1="437.69" x2="454.71" y2="437.69" stroke-width="0.9"/>
<line x1="469.82" y1="407.69" x2="469.82" y2="443.42" stroke="#303030" stroke-width="0.95"/>
<rect x="467.87" y="421.13" width="3.9" height="19.42"/>
<rect x="465.87" y="423.12" width="7.9" height="9.84"/>
<line x1="465.87" y1="427.86" x2="473.77" y2="427.86" stroke-width="0.9"/>
<line x1="488.88" y1="412.54" x2="488.88" y2="448.15" stroke="#303030" stroke-width="0.95"/>
<rect x="486.93" y="418.27" width="3.9" height="27.02"/>
<rect x="484.93" y="424.37" width="7.9" height="15.31"/>
<line x1="484.93" y1="430.72" x2="492.83" y2="430.72" stroke-width="0.9"/>
<line x1="507.94" y1="427.23" x2="507.94" y2="460.60" stroke="#303030" stroke-width="0.95"/>
<rect x="505.99" y="429.72" width="3.9" height="26.64"/>
<rect x="503.99" y="436.82" width="7.9" height="14.19"/>
<line x1="503.99" y1="442.55" x2="511.89" y2="442.55" stroke-width="0.9"/>
<line x1="527.00" y1="416.40" x2="527.00" y2="473.55" stroke="#303030" stroke-width="0.95"/>
<rect x="525.05" y="426.36" width="3.9" height="35.73"/>
<rect x="523.05" y="433.96" width="7.9" height="19.05"/>
<line x1="523.05" y1="442.55" x2="530.95" y2="442.55" stroke-width="0.9"/>
<line x1="546.06" y1="400.59" x2="546.06" y2="456.37" stroke="#303030" stroke-width="0.95"/>
<rect x="544.11" y="406.32" width="3.9" height="40.59"/>
<rect x="542.11" y="418.64" width="7.9" height="15.69"/>
<line x1="542.11" y1="427.23" x2="550.01" y2="427.23" stroke-width="0.9"/>
<line x1="565.12" y1="399.22" x2="565.12" y2="455.87" stroke="#303030" stroke-width="0.95"/>
<rect x="563.17" y="404.45" width="3.9" height="42.83"/>
<rect x="561.17" y="410.18" width="7.9" height="18.55"/>
<line x1="561.17" y1="419.02" x2="569.07" y2="419.02" stroke-width="0.9"/>
<line x1="584.18" y1="404.45" x2="584.18" y2="472.93" stroke="#303030" stroke-width="0.95"/>
<rect x="582.23" y="414.91" width="3.9" height="32.37"/>
<rect x="580.23" y="419.02" width="7.9" height="21.54"/>
<line x1="580.23" y1="430.10" x2="588.13" y2="430.10" stroke-width="0.9"/>
<line x1="603.24" y1="399.22" x2="603.24" y2="452.63" stroke="#303030" stroke-width="0.95"/>
<rect x="601.29" y="403.45" width="3.9" height="30.88"/>
<rect x="599.29" y="409.18" width="7.9" height="19.05"/>
<line x1="599.29" y1="415.78" x2="607.19" y2="415.78" stroke-width="0.9"/>
<line x1="622.30" y1="388.76" x2="622.30" y2="433.58" stroke="#303030" stroke-width="0.95"/>
<rect x="620.35" y="394.86" width="3.9" height="31.00"/>
<rect x="618.35" y="399.59" width="7.9" height="13.45"/>
<line x1="618.35" y1="404.45" x2="626.25" y2="404.45" stroke-width="0.9"/>
<line x1="641.36" y1="393.99" x2="641.36" y2="430.10" stroke="#303030" stroke-width="0.95"/>
<rect x="639.41" y="399.22" width="3.9" height="19.80"/>
<rect x="637.41" y="403.08" width="7.9" height="10.83"/>
<line x1="637.41" y1="405.32" x2="645.31" y2="405.32" stroke-width="0.9"/>
<line x1="660.42" y1="405.57" x2="660.42" y2="439.43" stroke="#303030" stroke-width="0.95"/>
<rect x="658.47" y="410.05" width="3.9" height="23.28"/>
<rect x="656.47" y="415.66" width="7.9" height="12.45"/>
<line x1="656.47" y1="420.14" x2="664.37" y2="420.14" stroke-width="0.9"/>
<line x1="679.48" y1="398.72" x2="679.48" y2="444.66" stroke="#303030" stroke-width="0.95"/>
<rect x="677.53" y="411.17" width="3.9" height="22.16"/>
<rect x="675.53" y="416.90" width="7.9" height="12.45"/>
<line x1="675.53" y1="421.38" x2="683.43" y2="421.38" stroke-width="0.9"/>
<line x1="698.54" y1="384.03" x2="698.54" y2="436.45" stroke="#303030" stroke-width="0.95"/>
<rect x="696.59" y="405.07" width="3.9" height="24.90"/>
<rect x="694.59" y="410.68" width="7.9" height="12.45"/>
<line x1="694.59" y1="415.28" x2="702.49" y2="415.28" stroke-width="0.9"/>
<line x1="717.60" y1="392.00" x2="717.60" y2="445.54" stroke="#303030" stroke-width="0.95"/>
<rect x="715.65" y="404.45" width="3.9" height="31.62"/>
<rect x="713.65" y="412.29" width="7.9" height="19.67"/>
<line x1="713.65" y1="420.88" x2="721.55" y2="420.88" stroke-width="0.9"/>
<line x1="736.66" y1="405.57" x2="736.66" y2="458.11" stroke="#303030" stroke-width="0.95"/>
<rect x="734.71" y="413.91" width="3.9" height="40.21"/>
<rect x="732.71" y="426.49" width="7.9" height="20.42"/>
<line x1="732.71" y1="438.31" x2="740.61" y2="438.31" stroke-width="0.9"/>
<line x1="755.72" y1="412.29" x2="755.72" y2="467.20" stroke="#303030" stroke-width="0.95"/>
<rect x="753.77" y="424.74" width="3.9" height="37.23"/>
<rect x="751.77" y="435.58" width="7.9" height="23.53"/>
<line x1="751.77" y1="443.92" x2="759.67" y2="443.92" stroke-width="0.9"/>
<line x1="774.78" y1="401.71" x2="774.78" y2="451.39" stroke="#303030" stroke-width="0.95"/>
<rect x="772.83" y="419.02" width="3.9" height="29.38"/>
<rect x="770.83" y="426.98" width="7.9" height="18.05"/>
<line x1="770.83" y1="434.21" x2="778.73" y2="434.21" stroke-width="0.9"/>
<line x1="793.84" y1="405.57" x2="793.84" y2="461.97" stroke="#303030" stroke-width="0.95"/>
<rect x="791.89" y="422.50" width="3.9" height="30.88"/>
<rect x="789.89" y="429.72" width="7.9" height="18.05"/>
<line x1="789.89" y1="437.19" x2="797.79" y2="437.19" stroke-width="0.9"/>
<line x1="812.90" y1="415.66" x2="812.90" y2="489.11" stroke="#303030" stroke-width="0.95"/>
<rect x="810.95" y="439.43" width="3.9" height="35.73"/>
<rect x="808.95" y="447.28" width="7.9" height="24.40"/>
<line x1="808.95" y1="458.61" x2="816.85" y2="458.61" stroke-width="0.9"/>
</g>
<polyline points="50.50,466.70 69.56,485.87 88.62,475.42 107.68,461.72 126.74,473.92 145.80,457.11 164.86,442.42 183.92,436.20 202.98,441.55 222.04,426.74 241.10,425.37 260.16,421.51 279.22,420.63 298.28,419.02 317.34,411.42 336.40,406.32 355.46,417.77 374.52,421.51 393.58,419.02 412.64,419.64 431.70,435.45 450.76,437.69 469.82,426.74 488.88,431.59 507.94,445.29 527.00,453.01 546.06,432.96 565.12,412.04 584.18,415.78 603.24,412.04 622.30,400.59 641.36,403.45 660.42,416.90 679.48,421.38 698.54,412.29 717.60,412.29 736.66,420.14 755.72,434.83 774.78,428.11 793.84,434.83 812.90,453.01" fill="none" stroke="#d61414" stroke-width="1.18" stroke-linejoin="round"/>
<polyline points="50.50,466.70 69.56,484.13 88.62,474.79 107.68,462.59 126.74,475.79 145.80,459.98 164.86,443.05 183.92,436.20 202.98,437.69 222.04,424.37 241.10,422.50 260.16,421.01 279.22,420.63 298.28,420.63 317.34,415.28 336.40,411.05 355.46,419.64 374.52,422.50 393.58,413.91 412.64,415.28 431.70,431.59 450.76,436.82 469.82,428.23 488.88,430.72 507.94,442.55 527.00,442.55 546.06,426.36 565.12,421.51 584.18,429.10 603.24,419.02 622.30,406.94 641.36,407.69 660.42,421.38 679.48,422.00 698.54,416.40 717.60,422.00 736.66,435.58 755.72,443.29 774.78,434.21 793.84,437.19 812.90,458.61" fill="none" stroke="#1200b6" stroke-width="1.18" stroke-linejoin="round"/>
<rect x="41.0" y="379.2" width="781.5" height="115.60000000000002" fill="none" stroke="#000" stroke-width="1.2"/>
<g stroke="#000" stroke-width="1.2">
<line x1="35.65" y1="491.60" x2="41.0" y2="491.60"/>
<line x1="35.65" y1="466.70" x2="41.0" y2="466.70"/>
<line x1="35.65" y1="441.80" x2="41.0" y2="441.80"/>
<line x1="35.65" y1="416.90" x2="41.0" y2="416.90"/>
<line x1="35.65" y1="392.00" x2="41.0" y2="392.00"/>
<line x1="50.50" y1="494.8" x2="50.50" y2="500.15000000000003"/>
<line x1="126.74" y1="494.8" x2="126.74" y2="500.15000000000003"/>
<line x1="202.98" y1="494.8" x2="202.98" y2="500.15000000000003"/>
<line x1="279.22" y1="494.8" x2="279.22" y2="500.15000000000003"/>
<line x1="355.46" y1="494.8" x2="355.46" y2="500.15000000000003"/>
<line x1="431.70" y1="494.8" x2="431.70" y2="500.15000000000003"/>
<line x1="507.94" y1="494.8" x2="507.94" y2="500.15000000000003"/>
<line x1="584.18" y1="494.8" x2="584.18" y2="500.15000000000003"/>
<line x1="660.42" y1="494.8" x2="660.42" y2="500.15000000000003"/>
<line x1="736.66" y1="494.8" x2="736.66" y2="500.15000000000003"/>
<line x1="812.90" y1="494.8" x2="812.90" y2="500.15000000000003"/>
</g>
<g font-size="10.7" fill="#000" text-anchor="end">
<text x="32.1" y="496.10">2</text>
<text x="32.1" y="471.20">4</text>
<text x="32.1" y="446.30">6</text>
<text x="32.1" y="421.40">8</text>
<text x="32.1" y="396.50">10</text>
</g>
</g>
<g>
<text x="41.1" y="517.10" font-size="12.22" fill="#000">2m temperature (℃)</text>
<g stroke="#dbdbdb" stroke-width="0.65" stroke-dasharray="2.6 1.1" fill="none">
<line x1="41.0" y1="628.30" x2="822.5" y2="628.30"/>
<line x1="41.0" y1="604.35" x2="822.5" y2="604.35"/>
<line x1="41.0" y1="580.40" x2="822.5" y2="580.40"/>
<line x1="41.0" y1="556.45" x2="822.5" y2="556.45"/>
<line x1="41.0" y1="532.50" x2="822.5" y2="532.50"/>
<line x1="50.50" y1="521.6" x2="50.50" y2="637.0"/>
<line x1="126.74" y1="521.6" x2="126.74" y2="637.0"/>
<line x1="202.98" y1="521.6" x2="202.98" y2="637.0"/>
<line x1="279.22" y1="521.6" x2="279.22" y2="637.0"/>
<line x1="355.46" y1="521.6" x2="355.46" y2="637.0"/>
<line x1="431.70" y1="521.6" x2="431.70" y2="637.0"/>
<line x1="507.94" y1="521.6" x2="507.94" y2="637.0"/>
<line x1="584.18" y1="521.6" x2="584.18" y2="637.0"/>
<line x1="660.42" y1="521.6" x2="660.42" y2="637.0"/>
<line x1="736.66" y1="521.6" x2="736.66" y2="637.0"/>
<line x1="812.90" y1="521.6" x2="812.90" y2="637.0"/>
</g>
<g stroke="#061000" stroke-width="0.78" fill="#97f862">
<line x1="50.50" y1="566.27" x2="50.50" y2="566.27" stroke="#303030" stroke-width="0.95"/>
<rect x="48.55" y="566.27" width="3.9" height="0.01"/>
<rect x="46.55" y="566.27" width="7.9" height="0.01"/>
<line x1="46.55" y1="566.27" x2="54.45" y2="566.27" stroke-width="0.9"/>
<line x1="69.56" y1="597.40" x2="69.56" y2="600.76" stroke="#303030" stroke-width="0.95"/>
<rect x="67.61" y="597.88" width="3.9" height="2.39"/>
<rect x="65.61" y="598.36" width="7.9" height="1.44"/>
<line x1="65.61" y1="599.08" x2="73.51" y2="599.08" stroke-width="0.9"/>
<line x1="88.62" y1="560.28" x2="88.62" y2="562.68" stroke="#303030" stroke-width="0.95"/>
<rect x="86.67" y="560.52" width="3.9" height="1.92"/>
<rect x="84.67" y="561.00" width="7.9" height="0.96"/>
<line x1="84.67" y1="561.48" x2="92.57" y2="561.48" stroke-width="0.9"/>
<line x1="107.68" y1="537.05" x2="107.68" y2="558.37" stroke="#303030" stroke-width="0.95"/>
<rect x="105.73" y="545.43" width="3.9" height="11.97"/>
<rect x="103.73" y="549.74" width="7.9" height="5.27"/>
<line x1="103.73" y1="552.62" x2="111.63" y2="552.62" stroke-width="0.9"/>
<line x1="126.74" y1="586.39" x2="126.74" y2="595.49" stroke="#303030" stroke-width="0.95"/>
<rect x="124.79" y="588.30" width="3.9" height="5.75"/>
<rect x="122.79" y="589.26" width="7.9" height="3.35"/>
<line x1="122.79" y1="591.18" x2="130.69" y2="591.18" stroke-width="0.9"/>
<line x1="145.80" y1="582.56" x2="145.80" y2="606.75" stroke="#303030" stroke-width="0.95"/>
<rect x="143.85" y="584.47" width="3.9" height="9.10"/>
<rect x="141.85" y="585.91" width="7.9" height="3.83"/>
<line x1="141.85" y1="587.82" x2="149.75" y2="587.82" stroke-width="0.9"/>
<line x1="164.86" y1="560.28" x2="164.86" y2="573.69" stroke="#303030" stroke-width="0.95"/>
<rect x="162.91" y="563.63" width="3.9" height="8.62"/>
<rect x="160.91" y="565.07" width="7.9" height="5.27"/>
<line x1="160.91" y1="567.47" x2="168.81" y2="567.47" stroke-width="0.9"/>
<line x1="183.92" y1="525.55" x2="183.92" y2="548.31" stroke="#303030" stroke-width="0.95"/>
<rect x="181.97" y="529.39" width="3.9" height="5.75"/>
<rect x="179.97" y="529.87" width="7.9" height="3.83"/>
<line x1="179.97" y1="531.78" x2="187.87" y2="531.78" stroke-width="0.9"/>
<line x1="202.98" y1="566.75" x2="202.98" y2="573.69" stroke="#303030" stroke-width="0.95"/>
<rect x="201.03" y="567.95" width="3.9" height="2.87"/>
<rect x="199.03" y="568.42" width="7.9" height="1.92"/>
<line x1="199.03" y1="569.38" x2="206.93" y2="569.38" stroke-width="0.9"/>
<line x1="222.04" y1="578.00" x2="222.04" y2="583.51" stroke="#303030" stroke-width="0.95"/>
<rect x="220.09" y="578.72" width="3.9" height="4.07"/>
<rect x="218.09" y="579.44" width="7.9" height="2.63"/>
<line x1="218.09" y1="580.88" x2="225.99" y2="580.88" stroke-width="0.9"/>
<line x1="241.10" y1="562.20" x2="241.10" y2="576.33" stroke="#303030" stroke-width="0.95"/>
<rect x="239.15" y="563.63" width="3.9" height="10.54"/>
<rect x="237.15" y="566.03" width="7.9" height="5.27"/>
<line x1="237.15" y1="568.42" x2="245.05" y2="568.42" stroke-width="0.9"/>
<line x1="260.16" y1="551.66" x2="260.16" y2="564.59" stroke="#303030" stroke-width="0.95"/>
<rect x="258.21" y="555.01" width="3.9" height="6.23"/>
<rect x="256.21" y="555.97" width="7.9" height="3.35"/>
<line x1="256.21" y1="557.41" x2="264.11" y2="557.41" stroke-width="0.9"/>
<line x1="279.22" y1="562.20" x2="279.22" y2="578.24" stroke="#303030" stroke-width="0.95"/>
<rect x="277.27" y="564.11" width="3.9" height="11.02"/>
<rect x="275.27" y="566.03" width="7.9" height="5.51"/>
<line x1="275.27" y1="568.66" x2="283.17" y2="568.66" stroke-width="0.9"/>
<line x1="298.28" y1="573.69" x2="298.28" y2="581.36" stroke="#303030" stroke-width="0.95"/>
<rect x="296.33" y="575.13" width="3.9" height="4.55"/>
<rect x="294.33" y="576.09" width="7.9" height="2.63"/>
<line x1="294.33" y1="577.29" x2="302.23" y2="577.29" stroke-width="0.9"/>
<line x1="317.34" y1="564.11" x2="317.34" y2="579.44" stroke="#303030" stroke-width="0.95"/>
<rect x="315.39" y="565.55" width="3.9" height="8.14"/>
<rect x="313.39" y="566.75" width="7.9" height="4.55"/>
<line x1="313.39" y1="568.66" x2="321.29" y2="568.66" stroke-width="0.9"/>
<line x1="336.40" y1="548.31" x2="336.40" y2="574.17" stroke="#303030" stroke-width="0.95"/>
<rect x="334.45" y="552.62" width="3.9" height="12.93"/>
<rect x="332.45" y="558.37" width="7.9" height="5.27"/>
<line x1="332.45" y1="561.72" x2="340.35" y2="561.72" stroke-width="0.9"/>
<line x1="355.46" y1="566.75" x2="355.46" y2="582.79" stroke="#303030" stroke-width="0.95"/>
<rect x="353.51" y="570.34" width="3.9" height="12.21"/>
<rect x="351.51" y="572.50" width="7.9" height="5.51"/>
<line x1="351.51" y1="575.13" x2="359.41" y2="575.13" stroke-width="0.9"/>
<line x1="374.52" y1="574.17" x2="374.52" y2="592.14" stroke="#303030" stroke-width="0.95"/>
<rect x="372.57" y="576.33" width="3.9" height="14.85"/>
<rect x="370.57" y="582.56" width="7.9" height="7.19"/>
<line x1="370.57" y1="585.43" x2="378.47" y2="585.43" stroke-width="0.9"/>
<line x1="393.58" y1="572.26" x2="393.58" y2="589.74" stroke="#303030" stroke-width="0.95"/>
<rect x="391.63" y="576.09" width="3.9" height="7.90"/>
<rect x="389.63" y="577.53" width="7.9" height="5.99"/>
<line x1="389.63" y1="580.16" x2="397.53" y2="580.16" stroke-width="0.9"/>
<line x1="412.64" y1="545.91" x2="412.64" y2="573.21" stroke="#303030" stroke-width="0.95"/>
<rect x="410.69" y="549.03" width="3.9" height="13.17"/>
<rect x="408.69" y="551.66" width="7.9" height="6.23"/>
<line x1="408.69" y1="555.01" x2="416.59" y2="555.01" stroke-width="0.9"/>
<line x1="431.70" y1="573.69" x2="431.70" y2="593.57" stroke="#303030" stroke-width="0.95"/>
<rect x="429.75" y="578.24" width="3.9" height="8.62"/>
<rect x="427.75" y="580.16" width="7.9" height="5.27"/>
<line x1="427.75" y1="582.56" x2="435.65" y2="582.56" stroke-width="0.9"/>
<line x1="450.76" y1="581.36" x2="450.76" y2="599.80" stroke="#303030" stroke-width="0.95"/>
<rect x="448.81" y="582.56" width="3.9" height="8.38"/>
<rect x="446.81" y="585.91" width="7.9" height="3.83"/>
<line x1="446.81" y1="587.82" x2="454.71" y2="587.82" stroke-width="0.9"/>
<line x1="469.82" y1="571.30" x2="469.82" y2="590.94" stroke="#303030" stroke-width="0.95"/>
<rect x="467.87" y="573.45" width="3.9" height="9.10"/>
<rect x="465.87" y="576.09" width="7.9" height="4.55"/>
<line x1="465.87" y1="578.00" x2="473.77" y2="578.00" stroke-width="0.9"/>
<line x1="488.88" y1="544.71" x2="488.88" y2="578.72" stroke="#303030" stroke-width="0.95"/>
<rect x="486.93" y="548.31" width="3.9" height="29.22"/>
<rect x="484.93" y="552.62" width="7.9" height="16.76"/>
<line x1="484.93" y1="562.68" x2="492.83" y2="562.68" stroke-width="0.9"/>
<line x1="507.94" y1="576.09" x2="507.94" y2="595.49" stroke="#303030" stroke-width="0.95"/>
<rect x="505.99" y="578.00" width="3.9" height="9.82"/>
<rect x="503.99" y="580.16" width="7.9" height="5.27"/>
<line x1="503.99" y1="582.56" x2="511.89" y2="582.56" stroke-width="0.9"/>
<line x1="527.00" y1="581.60" x2="527.00" y2="602.91" stroke="#303030" stroke-width="0.95"/>
<rect x="525.05" y="584.47" width="3.9" height="9.58"/>
<rect x="523.05" y="588.30" width="7.9" height="3.83"/>
<line x1="523.05" y1="590.22" x2="530.95" y2="590.22" stroke-width="0.9"/>
<line x1="546.06" y1="561.24" x2="546.06" y2="590.94" stroke="#303030" stroke-width="0.95"/>
<rect x="544.11" y="569.38" width="3.9" height="16.05"/>
<rect x="542.11" y="572.26" width="7.9" height="9.34"/>
<line x1="542.11" y1="577.53" x2="550.01" y2="577.53" stroke-width="0.9"/>
<line x1="565.12" y1="536.09" x2="565.12" y2="574.41" stroke="#303030" stroke-width="0.95"/>
<rect x="563.17" y="539.45" width="3.9" height="31.13"/>
<rect x="561.17" y="545.91" width="7.9" height="20.60"/>
<line x1="561.17" y1="555.97" x2="569.07" y2="555.97" stroke-width="0.9"/>
<line x1="584.18" y1="564.59" x2="584.18" y2="593.57" stroke="#303030" stroke-width="0.95"/>
<rect x="582.23" y="573.69" width="3.9" height="14.13"/>
<rect x="580.23" y="577.53" width="7.9" height="9.58"/>
<line x1="580.23" y1="582.56" x2="588.13" y2="582.56" stroke-width="0.9"/>
<line x1="603.24" y1="577.05" x2="603.24" y2="601.72" stroke="#303030" stroke-width="0.95"/>
<rect x="601.29" y="587.11" width="3.9" height="10.78"/>
<rect x="599.29" y="590.22" width="7.9" height="3.83"/>
<line x1="599.29" y1="592.14" x2="607.19" y2="592.14" stroke-width="0.9"/>
<line x1="622.30" y1="568.42" x2="622.30" y2="599.08" stroke="#303030" stroke-width="0.95"/>
<rect x="620.35" y="571.30" width="3.9" height="17.00"/>
<rect x="618.35" y="575.61" width="7.9" height="8.38"/>
<line x1="618.35" y1="579.44" x2="626.25" y2="579.44" stroke-width="0.9"/>
<line x1="641.36" y1="537.05" x2="641.36" y2="571.30" stroke="#303030" stroke-width="0.95"/>
<rect x="639.41" y="545.43" width="3.9" height="14.37"/>
<rect x="637.41" y="548.31" width="7.9" height="8.14"/>
<line x1="637.41" y1="552.14" x2="645.31" y2="552.14" stroke-width="0.9"/>
<line x1="660.42" y1="572.98" x2="660.42" y2="603.87" stroke="#303030" stroke-width="0.95"/>
<rect x="658.47" y="575.85" width="3.9" height="13.89"/>
<rect x="656.47" y="578.48" width="7.9" height="8.14"/>
<line x1="656.47" y1="582.08" x2="664.37" y2="582.08" stroke-width="0.9"/>
<line x1="679.48" y1="580.16" x2="679.48" y2="624.23" stroke="#303030" stroke-width="0.95"/>
<rect x="677.53" y="585.43" width="3.9" height="12.93"/>
<rect x="675.53" y="589.26" width="7.9" height="6.71"/>
<line x1="675.53" y1="592.61" x2="683.43" y2="592.61" stroke-width="0.9"/>
<line x1="698.54" y1="567.23" x2="698.54" y2="615.37" stroke="#303030" stroke-width="0.95"/>
<rect x="696.59" y="570.58" width="3.9" height="21.55"/>
<rect x="694.59" y="577.53" width="7.9" height="9.58"/>
<line x1="694.59" y1="582.56" x2="702.49" y2="582.56" stroke-width="0.9"/>
<line x1="717.60" y1="538.97" x2="717.60" y2="579.92" stroke="#303030" stroke-width="0.95"/>
<rect x="715.65" y="542.56" width="3.9" height="24.19"/>
<rect x="713.65" y="547.59" width="7.9" height="12.69"/>
<line x1="713.65" y1="554.29" x2="721.55" y2="554.29" stroke-width="0.9"/>
<line x1="736.66" y1="571.78" x2="736.66" y2="609.62" stroke="#303030" stroke-width="0.95"/>
<rect x="734.71" y="576.81" width="3.9" height="20.36"/>
<rect x="732.71" y="580.64" width="7.9" height="12.69"/>
<line x1="732.71" y1="587.11" x2="740.61" y2="587.11" stroke-width="0.9"/>
<line x1="755.72" y1="583.75" x2="755.72" y2="631.89" stroke="#303030" stroke-width="0.95"/>
<rect x="753.77" y="590.46" width="3.9" height="16.29"/>
<rect x="751.77" y="593.33" width="7.9" height="10.54"/>
<line x1="751.77" y1="599.56" x2="759.67" y2="599.56" stroke-width="0.9"/>
<line x1="774.78" y1="568.42" x2="774.78" y2="597.16" stroke="#303030" stroke-width="0.95"/>
<rect x="772.83" y="572.26" width="3.9" height="19.40"/>
<rect x="770.83" y="575.85" width="7.9" height="10.06"/>
<line x1="770.83" y1="580.16" x2="778.73" y2="580.16" stroke-width="0.9"/>
<line x1="793.84" y1="538.01" x2="793.84" y2="582.56" stroke="#303030" stroke-width="0.95"/>
<rect x="791.89" y="547.59" width="3.9" height="24.19"/>
<rect x="789.89" y="549.74" width="7.9" height="16.53"/>
<line x1="789.89" y1="557.65" x2="797.79" y2="557.65" stroke-width="0.9"/>
<line x1="812.90" y1="580.16" x2="812.90" y2="609.62" stroke="#303030" stroke-width="0.95"/>
<rect x="810.95" y="581.84" width="3.9" height="17.72"/>
<rect x="808.95" y="587.11" width="7.9" height="7.90"/>
<line x1="808.95" y1="588.78" x2="816.85" y2="588.78" stroke-width="0.9"/>
</g>
<polyline points="50.50,566.27 69.56,599.08 88.62,561.48 107.68,553.10 126.74,590.70 145.80,583.99 164.86,565.55 183.92,534.18 202.98,569.38 222.04,583.99 241.10,567.47 260.16,556.45 279.22,570.34 298.28,577.05 317.34,567.47 336.40,559.80 355.46,573.21 374.52,582.56 393.58,578.24 412.64,551.18 431.70,578.72 450.76,587.11 469.82,581.60 488.88,579.20 507.94,581.60 527.00,591.66 546.06,585.19 565.12,552.14 584.18,578.24 603.24,592.14 622.30,580.64 641.36,555.01 660.42,583.75 679.48,591.18 698.54,583.03 717.60,560.04 736.66,593.81 755.72,603.39 774.78,587.11 793.84,555.97 812.90,588.78" fill="none" stroke="#d61414" stroke-width="1.18" stroke-linejoin="round"/>
<polyline points="50.50,566.27 69.56,599.08 88.62,561.48 107.68,553.10 126.74,590.70 145.80,588.30 164.86,567.95 183.92,534.18 202.98,569.38 222.04,580.16 241.10,567.95 260.16,557.89 279.22,568.66 298.28,577.05 317.34,569.38 336.40,562.20 355.46,575.13 374.52,583.51 393.58,580.16 412.64,555.97 431.70,582.56 450.76,587.82 469.82,578.00 488.88,562.68 507.94,582.56 527.00,589.74 546.06,576.33 565.12,555.01 584.18,580.16 603.24,591.18 622.30,579.44 641.36,553.10 660.42,582.56 679.48,592.14 698.54,582.08 717.60,555.97 736.66,587.11 755.72,599.56 774.78,580.16 793.84,557.65 812.90,589.26" fill="none" stroke="#1200b6" stroke-width="1.18" stroke-linejoin="round"/>
<rect x="41.0" y="521.6" width="781.5" height="115.39999999999998" fill="none" stroke="#000" stroke-width="1.2"/>
<g stroke="#000" stroke-width="1.2">
<line x1="35.65" y1="628.30" x2="41.0" y2="628.30"/>
<line x1="35.65" y1="604.35" x2="41.0" y2="604.35"/>
<line x1="35.65" y1="580.40" x2="41.0" y2="580.40"/>
<line x1="35.65" y1="556.45" x2="41.0" y2="556.45"/>
<line x1="35.65" y1="532.50" x2="41.0" y2="532.50"/>
<line x1="50.50" y1="637.0" x2="50.50" y2="642.35"/>
<line x1="126.74" y1="637.0" x2="126.74" y2="642.35"/>
<line x1="202.98" y1="637.0" x2="202.98" y2="642.35"/>
<line x1="279.22" y1="637.0" x2="279.22" y2="642.35"/>
<line x1="355.46" y1="637.0" x2="355.46" y2="642.35"/>
<line x1="431.70" y1="637.0" x2="431.70" y2="642.35"/>
<line x1="507.94" y1="637.0" x2="507.94" y2="642.35"/>
<line x1="584.18" y1="637.0" x2="584.18" y2="642.35"/>
<line x1="660.42" y1="637.0" x2="660.42" y2="642.35"/>
<line x1="736.66" y1="637.0" x2="736.66" y2="642.35"/>
<line x1="812.90" y1="637.0" x2="812.90" y2="642.35"/>
</g>
<g font-size="10.7" fill="#000" text-anchor="end">
<text x="32.1" y="632.80">24</text>
<text x="32.1" y="608.85">25</text>
<text x="32.1" y="584.90">26</text>
<text x="32.1" y="560.95">27</text>
<text x="32.1" y="537.00">28</text>
</g>
<g font-size="10.7" fill="#000" text-anchor="middle">
<text x="50.50" y="654.70">12Z</text>
<text x="50.50" y="667.20">06Mar</text>
<text x="126.74" y="654.70">12Z</text>
<text x="126.74" y="667.20">07Mar</text>
<text x="202.98" y="654.70">12Z</text>
<text x="202.98" y="667.20">08Mar</text>
<text x="279.22" y="654.70">12Z</text>
<text x="279.22" y="667.20">09Mar</text>
<text x="355.46" y="654.70">12Z</text>
<text x="355.46" y="667.20">10Mar</text>
<text x="431.70" y="654.70">12Z</text>
<text x="431.70" y="667.20">11Mar</text>
<text x="507.94" y="654.70">12Z</text>
<text x="507.94" y="667.20">12Mar</text>
<text x="584.18" y="654.70">12Z</text>
<text x="584.18" y="667.20">13Mar</text>
<text x="660.42" y="654.70">12Z</text>
<text x="660.42" y="667.20">14Mar</text>
<text x="736.66" y="654.70">12Z</text>
<text x="736.66" y="667.20">15Mar</text>
<text x="812.90" y="654.70">12Z</text>
<text x="812.90" y="667.20">16Mar</text>
</g>
</g>
</svg>
</body></html>
